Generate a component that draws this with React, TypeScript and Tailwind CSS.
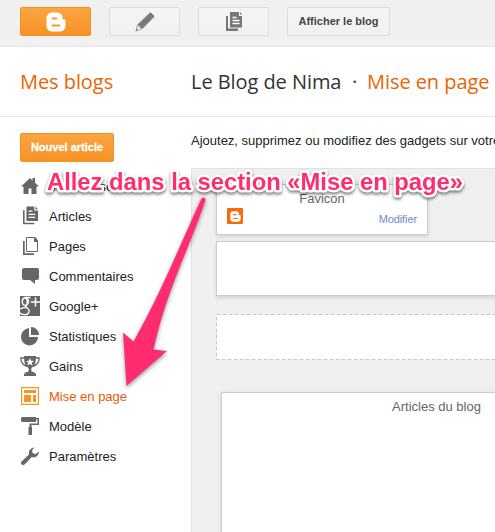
import type { ReactNode } from "react";

const Blogger = ({ className, hole }: { className: string; hole: string }) => (
  <svg viewBox="0 0 20 20" className={className}>
    <path fill="currentColor" d="M5.500 0.500h6a5.500 5.500 0 0 1 5 5.200c0 1.200.3 1.800 1.400 1.800h.9c.5 0 .7.3.7.8V14a5.500 5.500 0 0 1-5.500 5.500H6A5.500 5.500 0 0 1 .5 14V5.800A5.200 5.200 0 0 1 5.500.5z" />
    <path stroke={hole} strokeWidth="2" strokeLinecap="round" d="M6.500 6.500h4M6.500 13.500h7" />
  </svg>
);

const Doc = () => (
  <g fill="currentColor">
    <path d="M0 4h2v12.500h10V19H0z" />
    <path d="M4 0h9v4h3v11.500H4zM14 0l2 2.500h-2z" />
    <path d="M6.500 5.500h4M6.500 8.500h7M6.500 11.500h7" stroke="white" strokeWidth="1.300" />
  </g>
);

const icons: Record<string, ReactNode> = {
  home: <path fill="currentColor" d="M1 10.500 10 2l2.500 2.400V2H15v4.800l4 3.700h-2.500V18h-5v-5.500h-3V18h-5v-7.500z" />,
  posts: (
    <g transform="translate(3 .5) scale(.94)">
      <path fill="currentColor" d="M0 4h1.700v13.300H12V19H0zM3.700 0H12v4.200h4V15.500H3.700zM13.300 0 16 2.900h-2.700z" />
      <path d="M6 5h4M6 8.300h7M6 11.500h7" stroke="white" strokeWidth="1.300" />
    </g>
  ),
  pages: (
    <g>
      <path fill="none" stroke="currentColor" d="M6.500 1.500H15l2.500 3v11h-11z" />
      <path fill="currentColor" d="M14 1h1l3 3.500V6h-4zM3 5h1.700v12.300H14V19H3z" />
    </g>
  ),
  comments: <path fill="currentColor" d="M4 2h13a2 2 0 0 1 2 2v8a2 2 0 0 1-2 2h-2v4l-5-4H4a2 2 0 0 1-2-2V4a2 2 0 0 1 2-2z" />,
  google: (
    <g>
      <path fill="currentColor" d="M0 0h20v20H0z" />
      <g fill="none" stroke="white">
        <ellipse cx="4.800" cy="5.700" rx="2.500" ry="3.700" strokeWidth="1.500" />
        <path d="M4.500 1.500h6M7 2.500c2.500 2 2 4.500-.5 6.700-1.500 1.300-.5 2 1 3 2.800 2 2 6.500-3 6.500-2.500 0-4-.7-4.800-2M0 13c2-1.300 4-1.500 6.500-1.300" strokeWidth="1.300" />
        <path d="M11 6h9M15.500 1.500v9" strokeWidth="1.500" />
      </g>
    </g>
  ),
  stats: (
    <path fill="currentColor" d="M9 2v9h9a8.500 8.500 0 0 1-17 0A8.800 8.800 0 0 1 9 2zM11 1a8 8 0 0 1 8 8h-8z" />
  ),
  trophy: (
    <g>
      <path fill="none" stroke="currentColor" strokeWidth="1.300" d="M5 2H.8c0 4.500 2.200 7 6.200 8.500M15 2h4.200c0 4.500-2.200 7-6.200 8.500" />
      <path fill="currentColor" d="M4 0h12c0 6-1 10-4 11.500-1 .6-1 3.500 0 4.500h2.500v1.500H16V20H4v-2.500h1.500V16H8c1-1 1-3.900 0-4.500C5 10 4 6 4 0z" />
      <path fill="white" d="m10 2 1.100 2.700 2.900.2-2.200 1.800.7 2.800L10 8 7.500 9.500l.7-2.800L6 4.900l2.900-.2z" />
    </g>
  ),
  layout: (
    <g fill="#f89524">
      <path fillRule="evenodd" d="M1 1h18v18H1zM2.200 2.200v15.600h15.600V2.200z" />
      <path d="M4 4h12v3H4zM4 9h7v7H4zM13 9h3v7h-3z" />
    </g>
  ),
  roller: <path fill="currentColor" d="M3 1h13v1h3v7h-7.500v2h.5v8H8.500v-8h1V7.500h8v-4H16V6H3l-2-.5v-4z" />,
  wrench: (
    <path fill="currentColor" d="M1.300 15.800 9 8.500C8.200 5 10.500 1.700 14.300 1.500L12 4.300l.8 2.900 2.900.8 3.200-2.500c.2 4-3.700 6.800-7.100 5.600l-7.200 7.400c-2.200 1.500-4.500-.7-3.300-2.700z" />
  ),
};

const items = [
  ["home", "Vue d'ensemble"],
  ["posts", "Articles"],
  ["pages", "Pages"],
  ["comments", "Commentaires"],
  ["google", "Google+"],
  ["stats", "Statistiques"],
  ["trophy", "Gains"],
  ["layout", "Mise en page"],
  ["roller", "Modèle"],
  ["wrench", "Paramètres"],
];

const toolButton = "flex h-[29px] items-center justify-center rounded-[2px] border border-[#dcdcdc] bg-linear-to-b from-[#f5f5f5] to-[#f1f1f1]";

export default function App() {
  return (
    <div className="relative flex h-[532px] w-[495px] flex-col overflow-hidden bg-white font-['Liberation_Sans',sans-serif] text-[13px] text-[#222]">
      <div className="flex h-[47px] shrink-0 border-b border-[#e5e5e5] bg-[#f0f0f0] pt-[7px] pl-5">
        <div className="flex h-[29px] w-[71px] items-center justify-center rounded-[2px] border border-[#f29022] bg-linear-to-b from-[#faa541] to-[#f79223] text-white">
          <Blogger className="h-5 w-5" hole="#f99b32" />
        </div>
        <div className={`${toolButton} ml-[18px] w-[71px] text-[#777]`}>
          <svg viewBox="0 0 20 20" className="h-5 w-5">
            <path fill="currentColor" d="M14.500 1c.7-.7 1.200-.5 1.800.1l2.600 2.300c.6.600.6 1 .1 1.600L7.500 16.800.5 19.500l2-7z" />
            <path fill="#f3f3f3" d="m3 13.500 1.300.2.400 2 2 .4-.4.700-3.500 1.300-.9-.8z" />
            <path stroke="#999" strokeWidth=".5" d="M4.500 12.500 14.800 2M7 15 17.300 4.300" />
          </svg>
        </div>
        <div className={`${toolButton} ml-[18px] w-[71px] text-[#777]`}>
          <svg viewBox="0 0 16 20" className="h-5 w-4"><Doc /></svg>
        </div>
        <div className={`${toolButton} ml-[18px] w-[103px] text-[11px] font-bold text-[#444]`}>Afficher le blog</div>
      </div>

      <header className="flex h-[70px] shrink-0 items-center border-b border-[#e5e5e5] pl-5 font-['Open_Sans',sans-serif] text-[20px] tracking-[-0.06px] whitespace-nowrap text-[#333]">
        <span className="w-[171px] text-[#eb6400]">Mes blogs</span>
        <span className="w-[161px]">Le Blog de Nima</span>
        <span className="w-[15px]">·</span>
        <span className="text-[#eb6400]">Mise en page</span>
      </header>

      <div className="flex min-h-0 flex-1">
        <nav className="w-[191px] shrink-0 pt-4 pl-5">
          <div className="flex h-[29px] w-[94px] items-center justify-center rounded-[2px] border border-[#f29022] bg-linear-to-b from-[#faa541] to-[#f79223] text-[11px] font-bold text-white [-webkit-text-stroke:0.3px_white]">
            Nouvel article
          </div>
          <ul className="mt-[9px]">
            {items.map(([icon, label]) => (
              <li key={icon} className={icon === "layout" ? "flex h-[30px] items-center gap-[9px] text-[#e8590c]" : "flex h-[30px] items-center gap-[9px]"}>
                <svg viewBox="0 0 20 20" className="h-5 w-5 text-[#666]">{icons[icon]}</svg>
                <span className="pt-[2px]">{label}</span>
              </li>
            ))}
          </ul>
        </nav>

        <main className="flex min-w-0 flex-1 flex-col">
          <p className="h-[51px] shrink-0 overflow-hidden pt-[14px] leading-5 whitespace-nowrap">Ajoutez, supprimez ou modifiez des gadgets sur votre blog</p>
          <div className="flex-1 overflow-hidden border-t border-l border-[#e2e2e2] bg-[#f0f0f0] pt-[15px] pl-6">
            <section className="flex h-[51px] w-[212px] flex-col border border-[#ccc] bg-white px-[10px] pt-[5px] shadow-[0_2px_4px_rgba(0,0,0,0.12)]">
              <h2 className="text-center leading-[18px] text-[#666]">Favicon</h2>
              <div className="flex items-start justify-between">
                <span className="flex h-4 w-4 items-center justify-center rounded-[1px] bg-[#f76b05] text-white">
                  <Blogger className="h-[11px] w-[11px]" hole="#f76b05" />
                </span>
                <span className="pt-1 text-[11px] leading-[14px] tracking-[-0.1px] text-[#6f87cc]">Modifier</span>
              </div>
            </section>
            <section className="mt-[6px] h-[55px] w-[400px] border border-[#ccc] bg-white shadow-[0_2px_4px_rgba(0,0,0,0.12)]" />
            <section className="mt-[18px] flex h-[46px] w-[400px] bg-white">
              <svg className="h-[46px] w-[400px]" fill="none">
                <rect x=".5" y=".5" width="399" height="45" stroke="#c8c8c8" strokeDasharray="4 2" />
              </svg>
            </section>
            <section className="mt-[32px] ml-[5px] h-[180px] w-[431px] border border-[#ccc] bg-white pt-[5px] shadow-[0_1px_5px_rgba(0,0,0,0.1)]">
              <h2 className="text-center leading-[18px] text-[#666]">Articles du blog</h2>
            </section>
          </div>
        </main>
      </div>

      <svg viewBox="0 0 495 532" className="absolute inset-0 h-full w-full">
        <path
          className="drop-shadow-[0_2px_2px_rgba(0,0,0,0.4)]"
          fill="#ff2d6f"
          d="M201.500 198.500Q203.500 196.500 205.300 198.500C205.500 200 205 202 204 204.500C190 246 166 292 153.500 349.500L167 351L126.500 386L123 332.500L133.500 341.500C162 291 183 238 201.500 198.500Z"
        />
        <g className="text-[24px] font-bold">
          <text
            x="47"
            y="189.500"
            textLength="416"
            lengthAdjust="spacingAndGlyphs"
            className="fill-[#ff2d6f] stroke-white stroke-[5px] drop-shadow-[0_2px_1.500px_rgba(0,0,0,0.5)] [paint-order:stroke] [stroke-linejoin:round]"
          >
            Allez dans la section «Mise en page»
          </text>
        </g>
      </svg>
    </div>
  );
}
